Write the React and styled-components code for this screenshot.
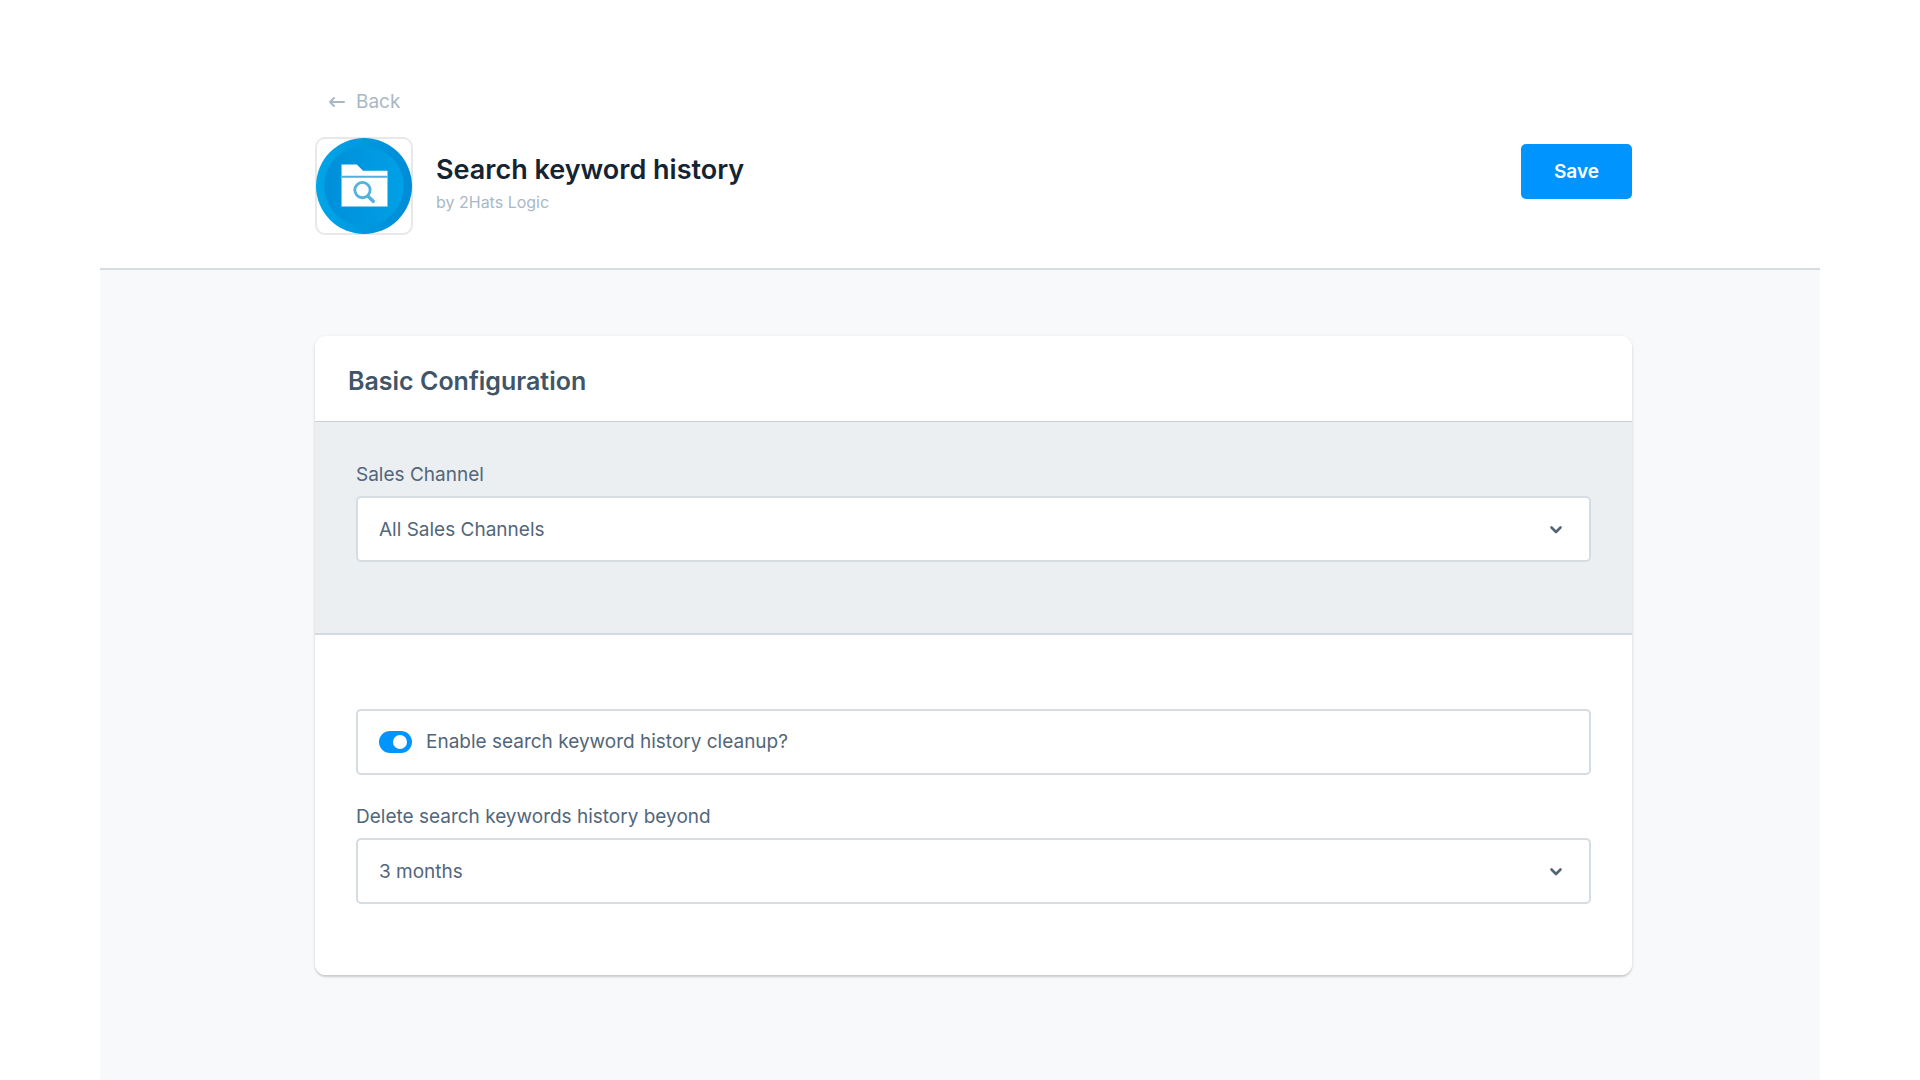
import React, {useState} from "react";
import styled, {createGlobalStyle} from "styled-components";

const GlobalStyle = createGlobalStyle`
  *, *::before, *::after {
    box-sizing: border-box;
  }
  body {
    margin: 0;
    background: #fff;
    color: #52667a;
    font-family: Inter, "Liberation Sans", sans-serif;
    font-size: 19px;
    line-height: 28px;
  }
  button, input, select {
    font: inherit;
  }
`

const Page = styled.div`
  display: flex;
  flex-direction: column;
  min-height: 100vh;
  padding: 0 100px;
`

const Header = styled.header`
  padding: 88px 188px 33px 215px;
  border-bottom: 2px solid #d5dde3;
`

const BackLink = styled.a`
  display: inline-flex;
  align-items: center;
  gap: 10px;
  margin-left: 13px;
  color: #a9b8c6;
  text-decoration: none;
`

const HeaderRow = styled.div`
  display: flex;
  align-items: flex-start;
  margin-top: 21px;
`

const PluginIcon = styled.div`
  width: 98px;
  height: 98px;
  padding: 1px;
  border-radius: 10px;
  box-shadow: inset 0 0 0 2px #e8e8e8;
  overflow: hidden;

  svg {
    display: block;
    width: 100%;
    height: 100%;
  }
`

const PluginInfo = styled.div`
  flex: 1;
  padding: 15px 0 0 23px;
`

const Title = styled.h1`
  margin: 0;
  color: #142433;
  font-size: 27px;
  font-weight: 600;
  line-height: 36px;
`

const Author = styled.p`
  margin: 0;
  color: #a9b8c6;
  font-size: 16px;
  line-height: 28px;
`

const SaveButton = styled.button`
  height: 55px;
  margin-top: 7px;
  padding: 0 33px;
  border: 0;
  border-radius: 5px;
  background: #0094ff;
  color: #fff;
  font-weight: 600;
  cursor: pointer;
`

const Content = styled.main`
  flex: 1;
  padding: 66px 188px 66px 215px;
  background: #f8f9fb;
`

const Card = styled.section`
  border-radius: 11px;
  background: #fff;
  box-shadow: 0 2px 2px rgba(0, 0, 0, 0.14), 0 1px 4px rgba(0, 0, 0, 0.08);
  overflow: hidden;
`

const CardTitle = styled.h2`
  margin: 0;
  padding: 30px 33px 25px;
  border-bottom: 1px solid #c6d0d9;
  color: #415567;
  font-size: 25px;
  font-weight: 600;
  line-height: 30px;
`

const Section = styled.div`
  display: flex;
  flex-direction: column;
  gap: 28px;
  padding: ${(props) => (props.$muted ? "39px 41px 71px" : "74px 41px 71px")};
  background: ${(props) => (props.$muted ? "#ebeff2" : "#fff")};
  border-bottom: ${(props) => (props.$muted ? "2px solid #d3dbe2" : "0")};
`

const Field = styled.div`
  display: flex;
  flex-direction: column;
  gap: 7px;
`

const SelectBox = styled.div`
  display: grid;
  align-items: center;

  > * {
    grid-area: 1 / 1;
  }
  svg {
    justify-self: end;
    margin: 2px 28px 0 0;
    pointer-events: none;
  }
`

const Select = styled.select`
  appearance: none;
  width: 100%;
  height: 66px;
  padding: 2px 60px 0 21px;
  border: 2px solid #d5dde3;
  border-radius: 5px;
  background: #fff;
  color: #52667a;
`

const SwitchField = styled.label`
  display: flex;
  align-items: center;
  gap: 14px;
  height: 66px;
  padding: 0 21px;
  border: 2px solid #d5dde3;
  border-radius: 5px;
  cursor: pointer;
`

const Switch = styled.input`
  appearance: none;
  display: flex;
  justify-content: ${(props) => (props.checked ? "flex-end" : "flex-start")};
  align-items: center;
  width: 33px;
  height: 22px;
  margin: 0;
  padding: 0 5px;
  border-radius: 11px;
  background: ${(props) => (props.checked ? "#0094ff" : "#c2ccd6")};

  &::before {
    content: "";
    width: 14px;
    height: 14px;
    border-radius: 50%;
    background: #fff;
  }
`

const ArrowLeft = () => (
    <svg width="18" height="12" viewBox="0 0 18 12" fill="none" stroke="currentColor" strokeWidth="2"
         strokeLinecap="round" strokeLinejoin="round" aria-hidden="true">
        <path d="M16 6H2M6 2 2 6l4 4"/>
    </svg>
)

const ChevronDown = () => (
    <svg width="14" height="10" viewBox="0 0 14 10" fill="none" stroke="#52667a" strokeWidth="2.6"
         strokeLinecap="round" strokeLinejoin="round" aria-hidden="true">
        <path d="M2.500 2.500 7 7l4.500-4.500"/>
    </svg>
)

const SearchFolder = () => (
    <svg viewBox="0 0 94 94" aria-hidden="true">
        <defs>
            <linearGradient id="ring" x1="0" x2="1">
                <stop offset="0" stopColor="#00a5e8"/>
                <stop offset="1" stopColor="#008bd6"/>
            </linearGradient>
            <linearGradient id="disc" x1="0" x2="1">
                <stop offset="0" stopColor="#008fda"/>
                <stop offset="1" stopColor="#00a0e6"/>
            </linearGradient>
        </defs>
        <circle cx="47" cy="47" r="47" fill="url(#ring)"/>
        <circle cx="47" cy="47" r="39" fill="url(#disc)"/>
        <path d="M25 26h15l6 6h24v35H25z" fill="#fff"/>
        <path d="M25 38h45" stroke="#4fb0dc" strokeWidth="2"/>
        <circle cx="45.5" cy="51" r="7.5" fill="none" stroke="#55b2dc" strokeWidth="2.8"/>
        <path d="M51 57l5 5" stroke="#55b2dc" strokeWidth="3.4" strokeLinecap="round"/>
    </svg>
)

const SelectField = (props) => {
    const {id, label, options} = props;
    return (
        <Field>
            <label htmlFor={id}>{label}</label>
            <SelectBox>
                <Select id={id}>
                    {options.map((option) => (
                        <option key={option}>{option}</option>
                    ))}
                </Select>
                <ChevronDown/>
            </SelectBox>
        </Field>
    )
}

const App = () => {
    const [cleanup, setCleanup] = useState(true);

    return (
        <>
            <GlobalStyle/>
            <Page>
                <Header>
                    <BackLink href="#">
                        <ArrowLeft/>
                        Back
                    </BackLink>
                    <HeaderRow>
                        <PluginIcon>
                            <SearchFolder/>
                        </PluginIcon>
                        <PluginInfo>
                            <Title>Search keyword history</Title>
                            <Author>by 2Hats Logic</Author>
                        </PluginInfo>
                        <SaveButton type="button">Save</SaveButton>
                    </HeaderRow>
                </Header>
                <Content>
                    <Card>
                        <CardTitle>Basic Configuration</CardTitle>
                        <Section $muted>
                            <SelectField id="sales-channel" label="Sales Channel" options={["All Sales Channels"]}/>
                        </Section>
                        <Section>
                            <SwitchField>
                                <Switch
                                    type="checkbox"
                                    checked={cleanup}
                                    onChange={(e) => setCleanup(e.target.checked)}
                                />
                                Enable search keyword history cleanup?
                            </SwitchField>
                            <SelectField id="delete-beyond" label="Delete search keywords history beyond"
                                         options={["3 months"]}/>
                        </Section>
                    </Card>
                </Content>
            </Page>
        </>
    )
}

export default App
